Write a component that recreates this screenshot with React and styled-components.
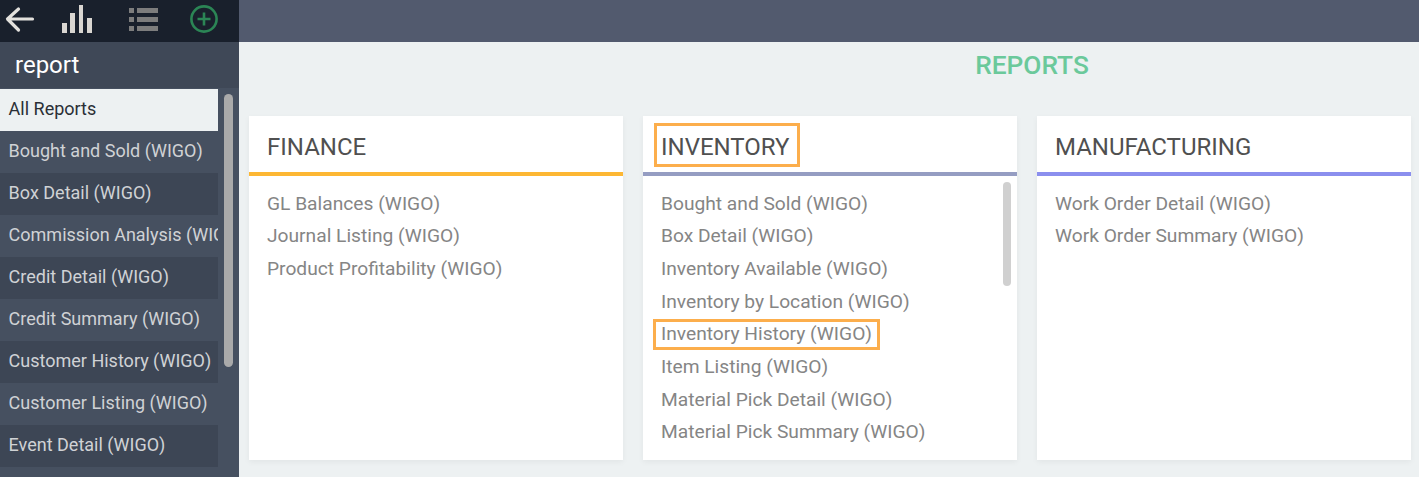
import React from 'react';
import styled, { createGlobalStyle } from 'styled-components';

const GlobalStyle = createGlobalStyle`
    html, body {
        margin: 0;
        padding: 0;
        height: 477px;
        overflow: hidden;
        background-color: #edf1f2;
        font-family: Roboto, "Liberation Sans", sans-serif;
    }
`;

const Wrap = styled.div`
    display: flex;
    width: 1419px;
    height: 477px;
    overflow: hidden;
`;
const Sidebar = styled.aside`
    display: flex;
    flex-direction: column;
    flex: 0 0 239px;
    background-color: #465060;
`;
const IconBar = styled.div`
    display: flex;
    align-items: center;
    height: 42px;
    background-color: #19202c;
`;
const IconSlot = styled.div`
    display: flex;
    margin-left: ${({ offset }) => offset}px;
`;
const SearchLabel = styled.div`
    height: 46px;
    line-height: 46px;
    padding-left: 15px;
    font-size: 24px;
    color: #fff;
    background-color: #3f4857;
`;
const ListArea = styled.div`
    position: relative;
    flex: 1;
    padding-top: 1px;
    overflow: hidden;
`;
const SideItem = styled.div`
    width: 218px;
    height: 42px;
    line-height: 40px;
    padding-left: 8.6px;
    box-sizing: border-box;
    font-size: 18px;
    white-space: nowrap;
    overflow: hidden;
    color: ${({ active }) => (active ? '#2a2f36' : '#d0d2d5')};
    background-color: ${({ active, odd }) => active ? '#edf1f2' : odd ? '#465060' : '#3d4655'};
`;
const SideThumb = styled.div`
    position: absolute;
    top: 6px;
    left: 224px;
    width: 9px;
    height: 273px;
    border-radius: 5px;
    background-color: #aaa;
`;
const Main = styled.main`
    display: flex;
    flex-direction: column;
    flex: 1;
`;
const TopBar = styled.div`
    height: 42px;
    background-color: #525a6e;
`;
const PageTitle = styled.h1`
    margin: 0;
    height: 74px;
    line-height: 47px;
    padding-left: 406px;
    text-align: center;
    font-size: 26.3px;
    font-weight: 500;
    color: #6bc99b;
`;
const Cards = styled.div`
    display: flex;
    gap: 20px;
    padding-left: 10px;
`;
const Card = styled.section`
    position: relative;
    display: flex;
    flex-direction: column;
    width: 374px;
    height: 344px;
    background-color: #fff;
    box-shadow: 0 2px 6px rgba(0, 0, 0, 0.05);
`;
const CardHead = styled.div`
    display: flex;
    align-items: flex-start;
    height: 49px;
    padding: 7px 0 0 18px;
    border-bottom: 4px solid ${({ color }) => color};
`;
const CardTitle = styled.h2`
    box-sizing: border-box;
    height: 44px;
    margin: 0 0 0 -7px;
    padding: 0 7px 0 4px;
    border: 3px solid ${({ marked }) => (marked ? '#fcae4c' : 'transparent')};
    font-size: 24px;
    font-weight: 400;
    line-height: 42px;
    color: #505050;
`;
const ReportList = styled.div`
    display: flex;
    flex-direction: column;
    align-items: flex-start;
    padding: 11.85px 0 0 18px;
`;
const ReportItem = styled.div`
    height: 32.62px;
    line-height: 32px;
    font-size: 19.2px;
    color: #858585;
    white-space: nowrap;
    ${({ marked }) => marked && `
        box-sizing: border-box;
        height: 31px;
        margin: 0.4px 0 1.22px -8px;
        padding: 0 5px;
        border: 3px solid #fcae4c;
        line-height: 24px;
    `}
`;
const ReportThumb = styled.div`
    position: absolute;
    top: 66px;
    right: 6px;
    width: 8px;
    height: 104px;
    border-radius: 4px;
    background-color: #d0d0d0;
`;

const sideItems = [
    'Bought and Sold (WIGO)',
    'Box Detail (WIGO)',
    'Commission Analysis (WIGO)',
    'Credit Detail (WIGO)',
    'Credit Summary (WIGO)',
    'Customer History (WIGO)',
    'Customer Listing (WIGO)',
    'Event Detail (WIGO)',
];

const cards = [
    {
        title: 'FINANCE',
        color: '#fdb733',
        items: ['GL Balances (WIGO)', 'Journal Listing (WIGO)', 'Product Profitability (WIGO)'],
    },
    {
        title: 'INVENTORY',
        color: '#959dc2',
        marked: true,
        scroll: true,
        items: [
            'Bought and Sold (WIGO)',
            'Box Detail (WIGO)',
            'Inventory Available (WIGO)',
            'Inventory by Location (WIGO)',
            'Inventory History (WIGO)',
            'Item Listing (WIGO)',
            'Material Pick Detail (WIGO)',
            'Material Pick Summary (WIGO)',
        ],
    },
    {
        title: 'MANUFACTURING',
        color: '#8b8fee',
        items: ['Work Order Detail (WIGO)', 'Work Order Summary (WIGO)'],
    },
];

const BackIcon = () => (
    <svg width="40" height="42" viewBox="0 0 40 42" fill="none" stroke="#e3e1dd" strokeWidth="3.2" strokeLinecap="round" strokeLinejoin="round">
        <path d="M32.5 19H8M18.5 9L7.5 19l11 11" />
    </svg>
);

const BarsIcon = () => (
    <svg width="30" height="42" viewBox="0 0 30 42" fill="#d9d6d1">
        <rect x="0" y="23" width="5" height="10" />
        <rect x="8" y="13" width="5" height="20" />
        <rect x="17" y="5" width="4" height="28" />
        <rect x="25" y="18" width="5" height="15" />
    </svg>
);

const ListIcon = () => (
    <svg width="29" height="42" viewBox="0 0 29 42" fill="#7d7d7d">
        <rect x="0" y="8" width="5" height="5" />
        <rect x="8" y="8" width="21" height="5" />
        <rect x="0" y="17" width="5" height="5" />
        <rect x="8" y="17" width="21" height="5" />
        <rect x="0" y="26" width="5" height="5" />
        <rect x="8" y="26" width="21" height="5" />
    </svg>
);

const PlusCircleIcon = () => (
    <svg width="30" height="42" viewBox="0 0 30 42" fill="none" stroke="#2b8555" strokeWidth="2.6">
        <circle cx="15" cy="19" r="12.6" />
        <path d="M15 12.5v13M8.5 19h13" />
    </svg>
);

export default function App() {
    return (
        <Wrap>
            <GlobalStyle />
            <Sidebar>
                <IconBar>
                    <IconSlot offset={0}><BackIcon /></IconSlot>
                    <IconSlot offset={22}><BarsIcon /></IconSlot>
                    <IconSlot offset={37}><ListIcon /></IconSlot>
                    <IconSlot offset={31}><PlusCircleIcon /></IconSlot>
                </IconBar>
                <SearchLabel>report</SearchLabel>
                <ListArea>
                    <SideItem active>All Reports</SideItem>
                    {sideItems.map((item, i) => (
                        <SideItem key={item} odd={i % 2 === 0}>{item}</SideItem>
                    ))}
                    <SideThumb />
                </ListArea>
            </Sidebar>
            <Main>
                <TopBar />
                <PageTitle>REPORTS</PageTitle>
                <Cards>
                    {cards.map((card) => (
                        <Card key={card.title}>
                            <CardHead color={card.color}>
                                <CardTitle marked={card.marked}>{card.title}</CardTitle>
                            </CardHead>
                            <ReportList>
                                {card.items.map((item) => (
                                    <ReportItem key={item} marked={item === 'Inventory History (WIGO)'}>{item}</ReportItem>
                                ))}
                            </ReportList>
                            {card.scroll && <ReportThumb />}
                        </Card>
                    ))}
                </Cards>
            </Main>
        </Wrap>
    );
}
